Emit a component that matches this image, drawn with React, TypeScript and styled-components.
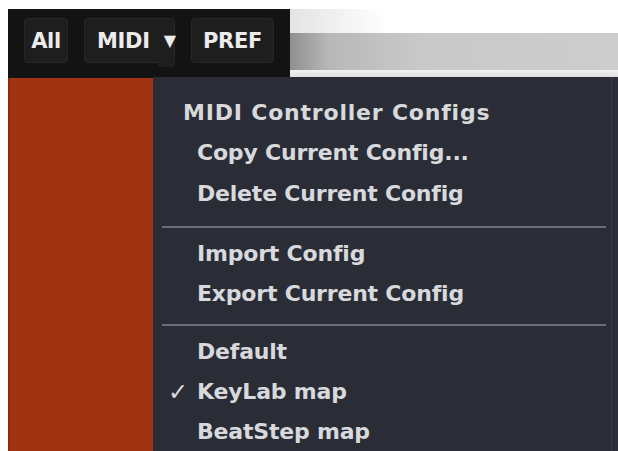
import React from "react";
import styled, { createGlobalStyle } from "styled-components";

const Global = createGlobalStyle`
  html, body { margin: 0; padding: 0; background: #ffffff; }
  body { font-family: "DejaVu Sans", "Liberation Sans", sans-serif; overflow: hidden; }
`;

const Window = styled.div`
  position: relative;
  width: 618px;
  height: 451px;
  padding: 9px 0 0 8px;
  box-sizing: border-box;
  display: flex;
  flex-direction: column;
`;

const TopRow = styled.div`
  display: flex;
  height: 69px;
  flex-shrink: 0;
`;

const Toolbar = styled.div`
  width: 282px;
  background: #131313;
  display: flex;
  align-items: flex-start;
  padding: 9px 0 0 16px;
  box-sizing: border-box;
  gap: 16px;
`;

const Button = styled.div<{ $w: number; $left?: boolean }>`
  position: relative;
  width: ${(p) => p.$w}px;
  height: 45px;
  box-sizing: border-box;
  background: #1e1e1e;
  border: 1px solid #272727;
  border-radius: 4px;
  display: flex;
  align-items: center;
  justify-content: ${(p) => (p.$left ? "flex-start" : "center")};
  padding-left: ${(p) => (p.$left ? "12px" : "0")};
  color: #ececec;
  font-family: "DejaVu Sans", sans-serif;
  font-weight: 700;
  font-size: 21px;
  letter-spacing: -0.3px;
`;

const Caret = styled.span`
  margin-left: 14px;
  font-size: 16px;
`;

const CaretTab = styled.div`
  position: absolute;
  right: -1px;
  bottom: -5px;
  width: 18px;
  height: 6px;
  background: #1e1e1e;
  border-radius: 0 0 3px 3px;
`;

const RightArea = styled.div`
  flex: 1;
  display: flex;
  flex-direction: column;
`;

const WhiteBand = styled.div`
  height: 24px;
  background: linear-gradient(90deg, #e4e4e4 0%, #ffffff 30%, #ffffff 100%);
`;

const GrayBar = styled.div`
  height: 37px;
  background: linear-gradient(90deg, #8f8f8f 0%, #b8b8b8 12%, #c9c9c9 40%, #cdcdcd 100%);
`;

const LightStrip = styled.div`
  height: 8px;
  background: linear-gradient(180deg, #f2f2f2 0%, #dcdcdc 100%);
`;

const Lower = styled.div`
  flex: 1;
  display: flex;
`;

const RedPanel = styled.div`
  width: 145px;
  background: #a03311;
  border-left: 2px solid #8c2c0e;
  box-sizing: border-box;
`;

const Menu = styled.div`
  position: absolute;
  left: 153px;
  top: 77px;
  right: 0;
  bottom: 0;
  background: #2a2d36;
  border-right: 6px solid #2c2f38;
  box-shadow: inset -1px 0 0 #3a3d46;
  padding: 15px 0 0 0;
  box-sizing: border-box;
  color: #d8d9dd;
  font-size: 22px;
  font-weight: 700;
  letter-spacing: -0.2px;
`;

const Header = styled.div`
  height: 41px;
  line-height: 41px;
  padding-left: 30px;
  letter-spacing: 0.8px;
`;

const Item = styled.div<{ $h?: number }>`
  display: flex;
  align-items: center;
  height: ${(p) => p.$h ?? 40}px;
  line-height: ${(p) => p.$h ?? 40}px;
  padding-left: 15px;
`;

const Check = styled.span`
  width: 29px;
  font-size: 24px;
  font-weight: 400;
`;

const Separator = styled.div<{ $above: number; $below: number }>`
  height: 2px;
  margin: ${(p) => p.$above}px 6px ${(p) => p.$below}px 9px;
  background: #6c6f77;
`;

export default function App() {
  return (
    <>
      <Global />
      <Window>
        <TopRow>
          <Toolbar>
            <Button $w={44}>All</Button>
            <Button $w={91} $left>
              MIDI<Caret>▼</Caret>
              <CaretTab />
            </Button>
            <Button $w={83}>PREF</Button>
          </Toolbar>
          <RightArea>
            <WhiteBand />
            <GrayBar />
            <LightStrip />
          </RightArea>
        </TopRow>
        <Lower>
          <RedPanel />
        </Lower>
        <Menu>
          <Header>MIDI Controller Configs</Header>
          <Item $h={40}><Check />Copy Current Config...</Item>
          <Item $h={42}><Check />Delete Current Config</Item>
          <Separator $above={11} $below={6} />
          <Item><Check />Import Config</Item>
          <Item><Check />Export Current Config</Item>
          <Separator $above={10} $below={6} />
          <Item><Check />Default</Item>
          <Item><Check>✓</Check>KeyLab map</Item>
          <Item><Check />BeatStep map</Item>
        </Menu>
      </Window>
    </>
  );
}
